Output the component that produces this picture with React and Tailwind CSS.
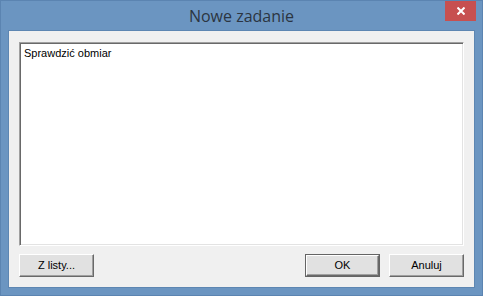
export default function App() {
  const btn =
    'w-[75px] h-[23px] bg-[#e1e1e1] border border-t-white border-l-white border-b-[#696969] border-r-[#696969] shadow-[inset_-1px_-1px_0_#a0a0a0] text-[11px] text-black flex items-center justify-center';

  return (
    <div className="w-[483px] h-[296px] bg-[#6b95c1] border border-[#5b84b1] flex flex-col px-[7px] pb-[7px] font-['Liberation_Sans',sans-serif]">
      <div className="relative h-[29px] flex items-center justify-center">
        <span className="text-[16px] text-[#2b3542] font-['Open_Sans',sans-serif] mt-[1px]">Nowe zadanie</span>
        <div className="absolute right-[-1px] top-0 w-[31px] h-[20px] bg-[#c75050] flex items-center justify-center">
          <svg width="8" height="8" viewBox="0 0 8 8">
            <path d="M0.5 0.5 L7.5 7.5 M7.5 0.5 L0.5 7.5" stroke="white" strokeWidth="2" />
          </svg>
        </div>
      </div>
      <div className="flex-1 bg-[#f0f0f0] border border-[#5d86b2] flex flex-col pt-[11px] px-[10px] pb-[10px]">
        <div className="h-[204px] border border-t-[#a0a0a0] border-l-[#a0a0a0] border-b-white border-r-white">
          <div className="h-full bg-white shadow-[inset_1px_1px_0_#696969,inset_-1px_-1px_0_#e3e3e3] px-[4px] pt-[4px] text-[11px] text-black leading-[13px]">
            Sprawdzić obmiar
          </div>
        </div>
        <div className="mt-[8px] flex items-center">
          <button className={btn}>Z listy...</button>
          <div className="flex-1" />
          <button className="w-[75px] h-[23px] border border-[#646464] p-0">
            <div className="w-full h-full bg-[#e1e1e1] border border-t-white border-l-white border-b-[#696969] border-r-[#696969] shadow-[inset_-1px_-1px_0_#a0a0a0] text-[11px] text-black flex items-center justify-center">
              OK
            </div>
          </button>
          <button className={btn + ' ml-[9px]'}>Anuluj</button>
        </div>
      </div>
    </div>
  );
}
